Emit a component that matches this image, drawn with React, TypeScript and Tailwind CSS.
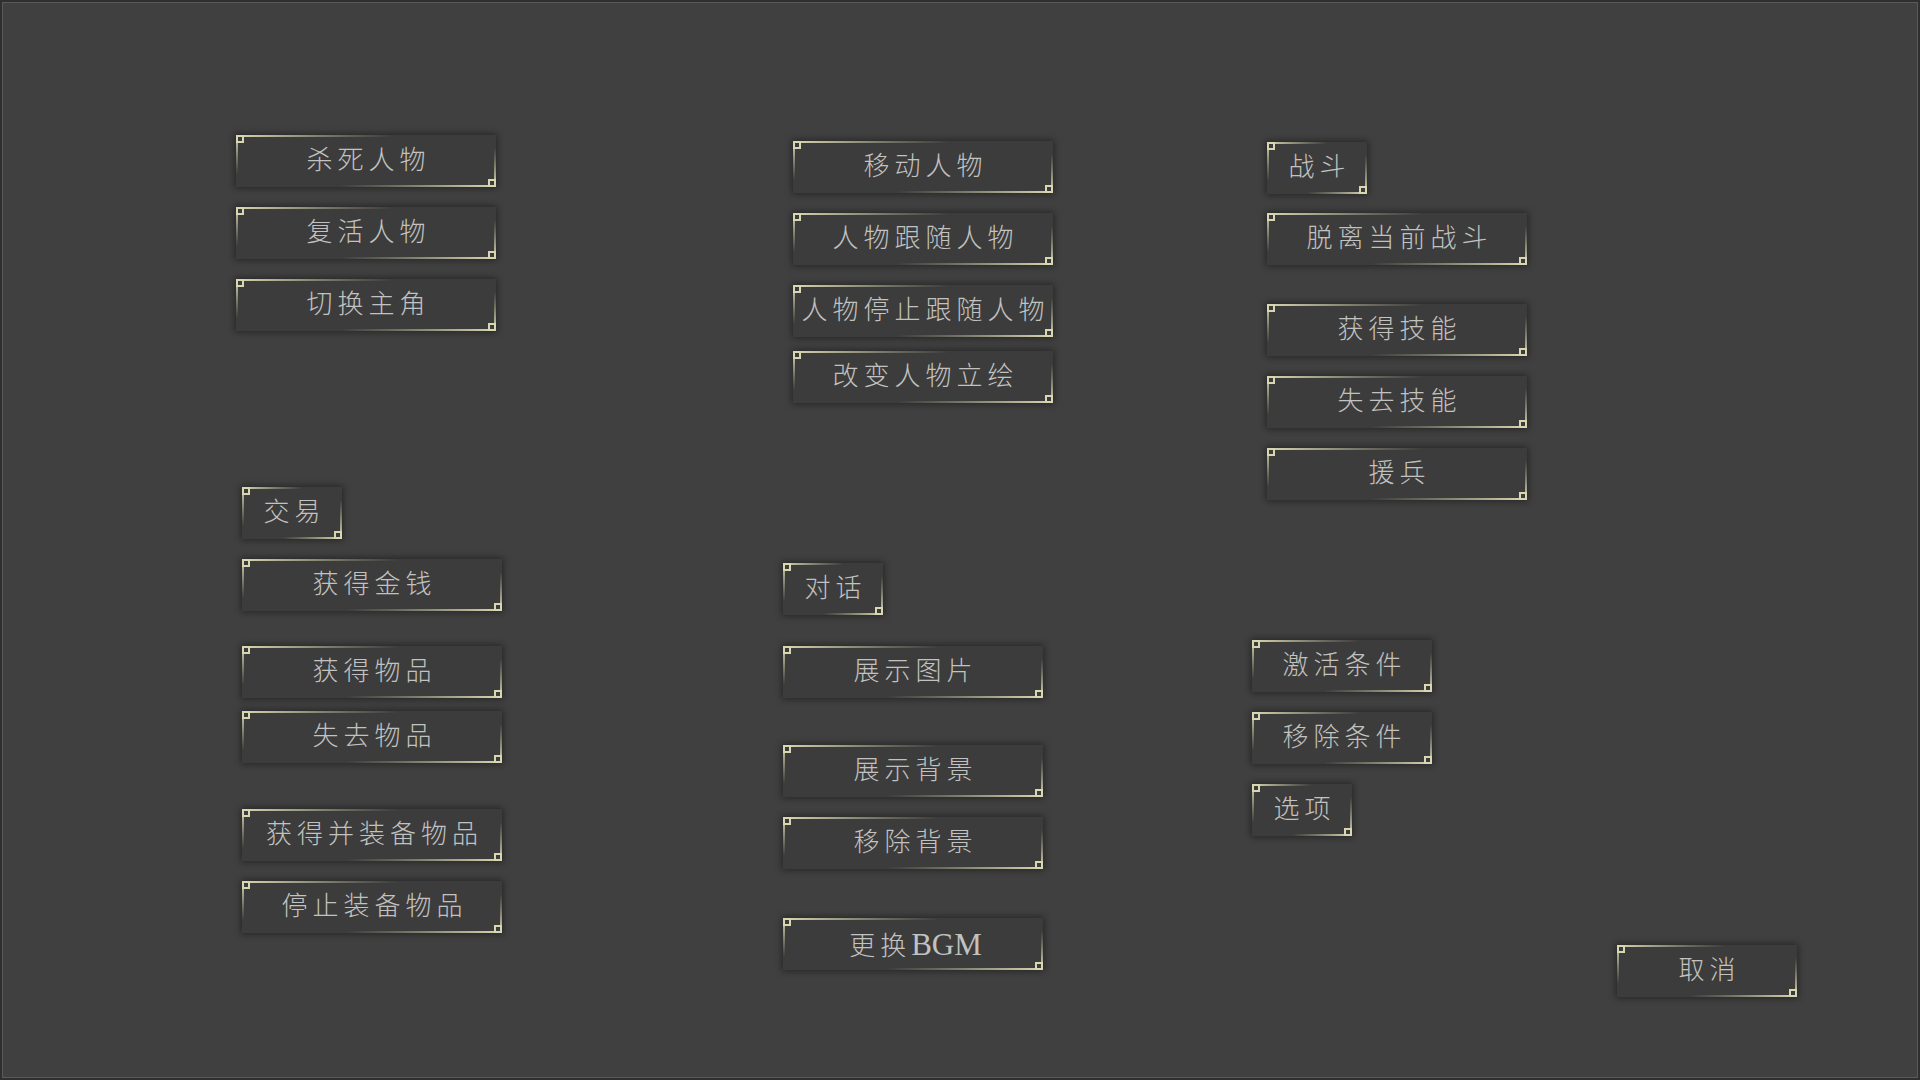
import React from "react";

interface BtnProps {
    label: React.ReactNode;
    className?: string;
}

function FrameButton({ label, className = "w-[260px]" }: BtnProps) {
    return (
        <div
            className={`relative flex h-[52px] shrink-0 items-center justify-center bg-[#3c3c3c] shadow-[0_0_7px_1px_rgba(0,0,0,0.45)] ${className}`}
        >
            {/* gold frame: bright at top-left and bottom-right corners, fading out */}
            <span className="absolute left-0 top-0 h-[2px] w-full bg-gradient-to-r from-[#d9d7b1] via-[#d9d7b1]/30 via-40% to-transparent to-60%" />
            <span className="absolute left-0 top-0 h-full w-[2px] bg-gradient-to-b from-[#d9d7b1] via-[#d9d7b1]/30 via-50% to-transparent to-75%" />
            <span className="absolute bottom-0 right-0 h-[2px] w-full bg-gradient-to-l from-[#d9d7b1] via-[#d9d7b1]/30 via-40% to-transparent to-60%" />
            <span className="absolute bottom-0 right-0 h-full w-[2px] bg-gradient-to-t from-[#d9d7b1] via-[#d9d7b1]/30 via-50% to-transparent to-75%" />
            <span className="absolute left-0 top-0 h-[8px] w-[8px] border-2 border-[#d9d7b1]" />
            <span className="absolute bottom-0 right-0 h-[8px] w-[8px] border-2 border-[#d9d7b1]" />
            <span
                className="whitespace-nowrap pl-[5px] text-[26px] font-light leading-none tracking-[5px] text-[#c2c2c0]"
                style={{ fontFamily: '"Liberation Serif", "Noto Sans CJK SC", serif' }}
            >
                {label}
            </span>
        </div>
    );
}

export default function App() {
    return (
        <div className="h-[1080px] w-[1920px] overflow-hidden bg-[#2f2f2f] p-[2px]">
            <div className="h-full w-full border border-[#5a5a5a] bg-[#404040]">
                <div className="flex items-start pt-[132px]">
                    {/* column 1 */}
                    <div className="ml-[233px] flex w-[266px] flex-col items-start">
                        <FrameButton label="杀死人物" />
                        <FrameButton label="复活人物" className="mt-[20px] w-[260px]" />
                        <FrameButton label="切换主角" className="mt-[20px] w-[260px]" />
                        <FrameButton label="交易" className="ml-[6px] mt-[156px] w-[100px]" />
                        <FrameButton label="获得金钱" className="ml-[6px] mt-[20px] w-[260px]" />
                        <FrameButton label="获得物品" className="ml-[6px] mt-[35px] w-[260px]" />
                        <FrameButton label="失去物品" className="ml-[6px] mt-[13px] w-[260px]" />
                        <FrameButton label="获得并装备物品" className="ml-[6px] mt-[46px] w-[260px]" />
                        <FrameButton label="停止装备物品" className="ml-[6px] mt-[20px] w-[260px]" />
                    </div>

                    {/* column 2 */}
                    <div className="ml-[281px] flex w-[270px] flex-col items-start">
                        <FrameButton label="移动人物" className="ml-[10px] mt-[6px] w-[260px]" />
                        <FrameButton label="人物跟随人物" className="ml-[10px] mt-[20px] w-[260px]" />
                        <FrameButton label="人物停止跟随人物" className="ml-[10px] mt-[20px] w-[260px]" />
                        <FrameButton label="改变人物立绘" className="ml-[10px] mt-[14px] w-[260px]" />
                        <FrameButton label="对话" className="mt-[160px] w-[100px]" />
                        <FrameButton label="展示图片" className="mt-[31px] w-[260px]" />
                        <FrameButton label="展示背景" className="mt-[47px] w-[260px]" />
                        <FrameButton label="移除背景" className="mt-[20px] w-[260px]" />
                        <FrameButton
                            label={
                                <>
                                    更换<span className="text-[31px] tracking-normal">BGM</span>
                                </>
                            }
                            className="mt-[49px] w-[260px]"
                        />
                    </div>

                    {/* column 3 */}
                    <div className="ml-[199px] flex w-[275px] flex-col items-start">
                        <FrameButton label="战斗" className="ml-[15px] mt-[7px] w-[100px]" />
                        <FrameButton label="脱离当前战斗" className="ml-[15px] mt-[19px] w-[260px]" />
                        <FrameButton label="获得技能" className="ml-[15px] mt-[39px] w-[260px]" />
                        <FrameButton label="失去技能" className="ml-[15px] mt-[20px] w-[260px]" />
                        <FrameButton label="援兵" className="ml-[15px] mt-[20px] w-[260px]" />
                        <FrameButton label="激活条件" className="mt-[140px] w-[180px]" />
                        <FrameButton label="移除条件" className="mt-[20px] w-[180px]" />
                        <FrameButton label="选项" className="mt-[20px] w-[100px]" />
                    </div>

                    {/* cancel */}
                    <div className="ml-[90px] mt-[810px]">
                        <FrameButton label="取消" className="w-[180px]" />
                    </div>
                </div>
            </div>
        </div>
    );
}
